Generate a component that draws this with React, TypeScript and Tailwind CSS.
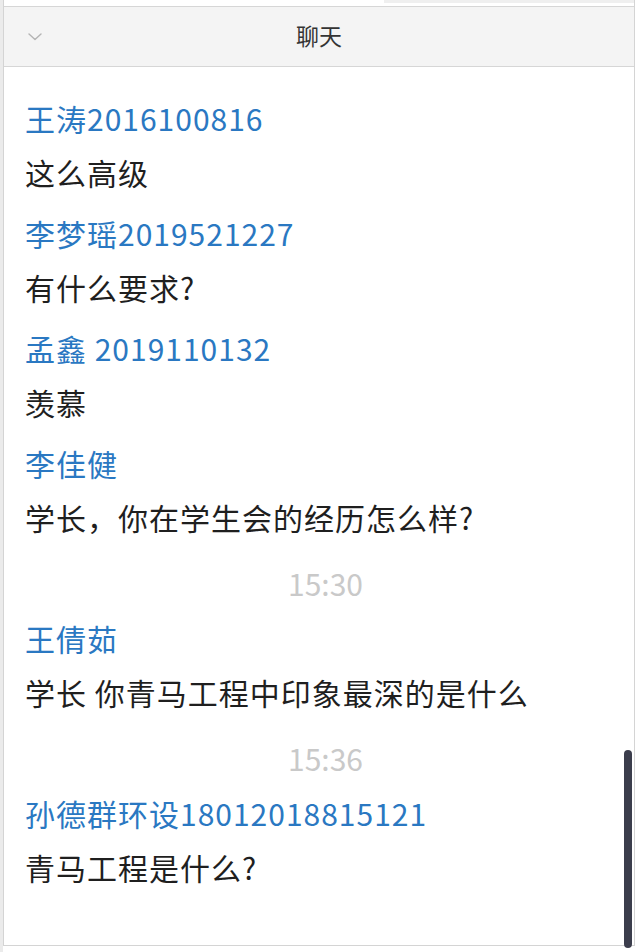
import React from "react";

type Item =
  | { kind: "msg"; name: string; text: string }
  | { kind: "time"; time: string };

const ITEMS: Item[] = [
  { kind: "msg", name: "王涛2016100816", text: "这么高级" },
  { kind: "msg", name: "李梦瑶2019521227", text: "有什么要求?" },
  { kind: "msg", name: "孟鑫 2019110132", text: "羡慕" },
  { kind: "msg", name: "李佳健", text: "学长，你在学生会的经历怎么样?" },
  { kind: "time", time: "15:30" },
  { kind: "msg", name: "王倩茹", text: "学长 你青马工程中印象最深的是什么" },
  { kind: "time", time: "15:36" },
  { kind: "msg", name: "孙德群环设18012018815121", text: "青马工程是什么?" },
];

const FONT = {
  fontFamily: '"Noto Sans CJK SC", "Noto Sans", sans-serif',
};

function Chevron() {
  return (
    <svg width="14" height="8" viewBox="0 0 14 8" fill="none">
      <path
        d="M1 1l6 5.5L13 1"
        stroke="#b4b4b4"
        strokeWidth="1.4"
        strokeLinecap="round"
        strokeLinejoin="round"
      />
    </svg>
  );
}

export default function App() {
  return (
    <div
      className="relative w-[640px] h-[952px] bg-white overflow-hidden flex"
      style={FONT}
    >
      <div className="w-[3px] h-full bg-[#ebebeb]" />
      <div className="w-[632px] h-[946px] flex flex-col border-l border-r border-b border-[#d4d4d4]">
        <div className="h-[6px] bg-white flex justify-end">
          <div className="w-[250px] h-[3px] bg-[#efefef]" />
        </div>
        <div className="h-[61px] bg-[#f4f4f4] border-y border-[#d6d6d6] flex items-center relative shrink-0">
          <div className="absolute left-[24px] top-[26px]">
            <Chevron />
          </div>
          <div className="flex-1 text-center text-[23px] text-[#333] pb-[2px]">
            聊天
          </div>
        </div>
        <div className="flex-1 pl-[21px] pt-[26px]">
          {ITEMS.map((item, i) =>
            item.kind === "msg" ? (
              <div key={i} className="mb-[7px] tracking-[1px] text-[30px]">
                <div className="h-[50px] leading-[50px] text-[#2a78c2]">
                  {item.name}
                </div>
                <div className="h-[58px] leading-[58px] text-[#1f1f1f]">
                  {item.text}
                </div>
              </div>
            ) : (
              <div
                key={i}
                className="h-[60px] leading-[60px] text-center text-[30px] text-[#c9c9c9] pr-[8px]"
              >
                {item.time}
              </div>
            )
          )}
        </div>
      </div>
      <div className="absolute left-[624px] top-[750px] w-[8px] h-[198px] rounded-full bg-[#3b3d4c]" />
    </div>
  );
}
